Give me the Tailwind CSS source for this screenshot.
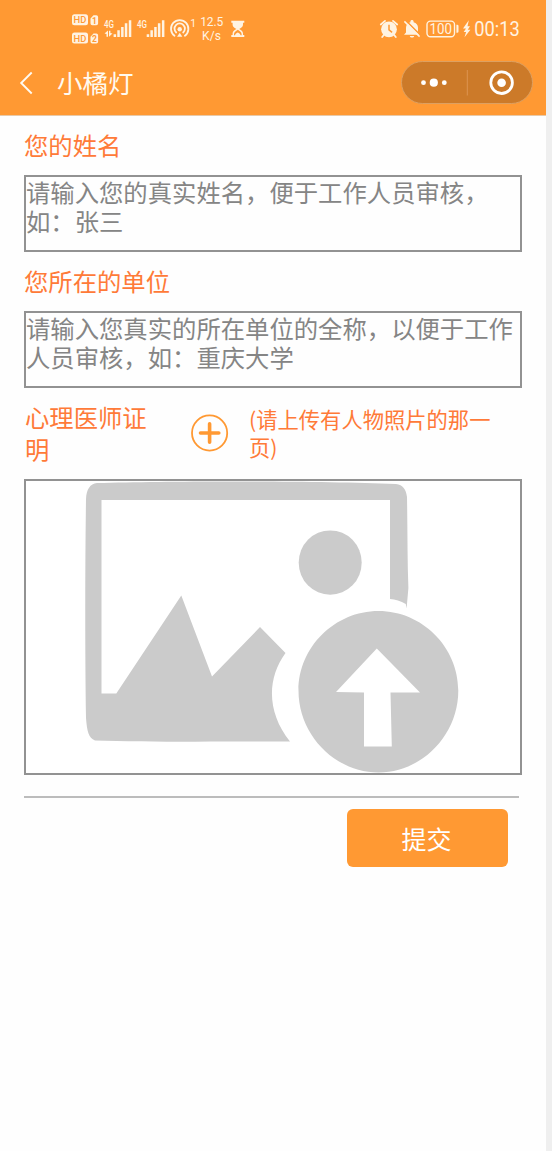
<!DOCTYPE html>
<html lang="zh-CN">
<head>
<meta charset="utf-8">
<title>小橘灯</title>
<script src="https://cdn.jsdelivr.net/npm/@tailwindcss/browser@4"></script>
</head>
<body class="h-[1151px] w-[552px] overflow-hidden bg-[#efefef] font-['Noto_Sans_CJK_SC',sans-serif]">
<div class="flex h-full w-[546px] flex-col bg-[#fefefe]">
  <header class="flex h-[116px] flex-col border-b border-[#e8c9a8] bg-[#ff9933]">
    <div class="flex h-[58px] justify-between pl-[72px] pr-[25px] text-[#fff3e2]">
      <svg class="h-[58px] w-[176px] shrink-0" viewBox="72 0 176 58" fill="currentColor" font-family="Roboto, sans-serif">
        <rect x="72" y="14.3" width="16" height="11" rx="2.5"/>
        <path d="M90.5 18.5l3-3.2h2.8a1.8 1.8 0 0 1 1.8 1.8v6.4a1.8 1.8 0 0 1-1.8 1.8h-4a1.8 1.8 0 0 1-1.8-1.8z"/>
        <rect x="72" y="32.5" width="16" height="11" rx="2.5"/>
        <path d="M90.5 36.7l3-3.2h2.8a1.8 1.8 0 0 1 1.8 1.8v6.4a1.8 1.8 0 0 1-1.8 1.8h-4a1.8 1.8 0 0 1-1.8-1.8z"/>
        <g fill="#ff9933" font-weight="500">
          <text x="73.6" y="23.3" font-size="9.8" textLength="12.8" lengthAdjust="spacingAndGlyphs">HD</text>
          <text x="92" y="23.7" font-size="8.5" font-weight="700">1</text>
          <text x="73.6" y="41.5" font-size="9.8" textLength="12.8" lengthAdjust="spacingAndGlyphs">HD</text>
          <text x="92" y="41.9" font-size="8.5" font-weight="700">2</text>
        </g>
        <g font-size="10.5" font-weight="500">
          <text x="104" y="27.7" textLength="10" lengthAdjust="spacingAndGlyphs">4G</text>
          <text x="137" y="27.7" textLength="10" lengthAdjust="spacingAndGlyphs">4G</text>
        </g>
        <path d="M104.500 33.500l3.500-3v6.300h-1.500v-2.700zM109 30.800h1.400v2.200l2.100.4-3.500 3.300z"/>
        <path d="M113.600 34.300h2.500v2.700h-2.500zM117.300 30.300h2.500V37h-2.500zM121.100 27h2.500v10h-2.500zM124.800 23.300h2.500V37h-2.500zM128.800 20.300h2.500V37h-2.500z"/>
        <path d="M146.700 34.300h2.500v2.700h-2.500zM150.400 30.300h2.500V37h-2.500zM154.200 27h2.500v10h-2.500zM157.900 23.300h2.500V37h-2.500zM161.900 20.300h2.500V37h-2.500z"/>
        <g fill="none" stroke="currentColor" stroke-width="1.8" stroke-linecap="round">
          <path d="M174.500 35.700a8.700 8.700 0 1 1 10.400 0"/>
          <path d="M176.200 32.500a5.200 5.200 0 1 1 7 0"/>
        </g>
        <circle cx="179.700" cy="29.200" r="2.200"/>
        <path d="M179.700 32.800l2.600 3.900h-5.200z"/>
        <text x="190.200" y="27" font-size="10.5">1</text>
        <text x="200.200" y="26" font-size="12" textLength="23">12.5</text>
        <text x="202" y="40.300" font-size="12" textLength="19">K/s</text>
        <path d="M231.300 20.800h13v1.900h-1.300v1.800c0 2.100-1.300 3.100-3.800 4.400 2.500 1.300 3.800 2.500 3.800 4.500v1.700h1.300V37h-13v-1.900h1.300v-1.700c0-2 1.300-3.200 3.800-4.500-2.500-1.300-3.800-2.300-3.800-4.400v-1.800h-1.300z"/>
        <path fill="#ff9933" d="M234 35.200v-1.200c0-2 1.800-2.800 3.800-4.200 2 1.400 3.800 2.200 3.800 4.200v1.200h-1c-.5-1.500-1.500-2-2.800-2.700-1.300.7-2.300 1.200-2.800 2.700z"/>
      </svg>
      <svg class="h-[58px] w-[142px] shrink-0" viewBox="379 0 142 58" fill="currentColor" font-family="Roboto, sans-serif">
        <circle cx="389" cy="29.300" r="7.900"/>
        <path d="M380.800 24.500l4.200-3.600M397.200 24.500l-4.200-3.600M383.800 35l-1.600 2M394.200 35l1.600 2" fill="none" stroke="currentColor" stroke-width="1.800" stroke-linecap="round"/>
        <path d="M389 24.800v5l3.100 2.500" fill="none" stroke="#ff9933" stroke-width="1.500"/>
        <path d="M404 34.800l2-2.400v-4.600c0-2.900 1.700-5 4.400-5.600v-.6c0-2 3.200-2 3.200 0v.6c2.700.6 4.400 2.700 4.400 5.600v4.600l2 2.400zM409.800 35.900h4.400c-.3 2.200-4.100 2.200-4.400 0z"/>
        <path d="M405.800 20.500l15 15" stroke="#ff9933" stroke-width="1.600"/>
        <path d="M404.400 21.400l15.200 15.200" stroke="currentColor" stroke-width="1.500"/>
        <rect x="427" y="21.100" width="27.500" height="15.600" rx="3.500" fill="none" stroke="currentColor" stroke-width="1.400"/>
        <path d="M456.400 24.700h.8a1.300 1.300 0 0 1 1.300 1.300v5.400a1.300 1.300 0 0 1-1.300 1.300h-.8z"/>
        <text x="429.500" y="34" font-size="14" textLength="22.500" lengthAdjust="spacingAndGlyphs">100</text>
        <path d="M468.800 20.200l-5.800 8.300h3l-2.300 3.500h2.400l-1.600 5.200 5.900-7.500h-2.700l2.300-3.500h-2.500z"/>
        <text x="474.300" y="36.400" font-size="19.5" textLength="45.500" lengthAdjust="spacingAndGlyphs">00:13</text>
      </svg>
    </div>
    <div class="flex h-[57px] items-start justify-between pl-[19px] pr-[13px] pt-[3px]">
      <div class="flex h-[44px] items-center">
        <svg class="h-6 w-[15px]" viewBox="0 0 15 24" fill="none" stroke="#fffaf0" stroke-width="1.900"><path d="M12.700 1.500L2.200 12l10.500 10.500"/></svg>
        <h1 class="ml-[23px] h-[44px] text-[25.5px] leading-[42px] text-[#fffaf0] font-normal">小橘灯</h1>
      </div>
      <div class="flex h-[43px] w-[132px] items-center rounded-full border border-[#dda061] bg-[#cc7a29]">
        <svg class="h-[41px] w-[130px]" viewBox="0 0 130 41" fill="#fff">
          <circle cx="21.500" cy="20.700" r="2.400"/><circle cx="31.800" cy="20.700" r="4.100"/><circle cx="42.300" cy="20.700" r="2.400"/>
          <path d="M65.300 8v25.500" stroke="#dc9450" stroke-width="1"/>
          <circle cx="99.600" cy="20.700" r="10.800" fill="none" stroke="#fff" stroke-width="2.800"/>
          <circle cx="99.600" cy="20.700" r="4.300"/>
        </svg>
      </div>
    </div>
  </header>
  <main class="flex flex-col pl-6 pr-6 text-[24.35px] text-[#ff7a38]">
    <label class="mt-[13px] h-[46px] leading-[32px]">您的姓名</label>
    <div class="h-[77px] w-[498px] border-2 border-t-[#929292] border-r-[#929292] border-b-[#929292] border-l-[#929292] leading-[29px] text-[#858585] whitespace-nowrap">请输入您的真实姓名，便于工作人员审核，<br>如：张三</div>
    <label class="mt-[13px] h-[46px] leading-[32px]">您所在的单位</label>
    <div class="h-[77px] w-[498px] border-2 border-[#929292] leading-[29px] text-[#858585] whitespace-nowrap">请输入您真实的所在单位的全称，以便于工作<br>人员审核，如：重庆大学</div>
    <div class="flex h-[90px] items-center pl-px">
      <div class="w-[166px] leading-[32px]">心理医师证<br>明</div>
      <svg class="h-[38px] w-[38px] shrink-0" viewBox="0 0 38 38" fill="none" stroke="#ff9933"><circle cx="18.600" cy="19" r="17.600" stroke-width="1.800"/><path d="M9.500 19h18.300M18.600 9.800v18.400" stroke-width="3.600" stroke-linecap="round"/></svg>
      <div class="ml-5 text-[21.3px] leading-[28px] whitespace-nowrap">(请上传有人物照片的那一<br>页)</div>
    </div>
    <div class="mt-px h-[296px] w-[498px] border-2 border-[#929292] bg-white">
      <svg class="h-[292px] w-[494px]" viewBox="26 481 494 292" fill="#cbcbcb">
        <path d="M97 483C175 480.700 315 480.700 396 484C403 485 406 489 407 497C407.600 530 407.300 560 408.400 588L406.600 608.500L405.800 604Q398 599.500 390 599V500H101.500V693.500H116.300L181.300 595.500L212 676.500L260 627L285.500 653C266.500 679 267 713 290 741.500C230 741.500 145 742.300 95 740.500C88.500 738 87 731 86 718C85 650 85 570 86 499C86.500 489 90 484 97 483Z"/>
        <ellipse cx="330.200" cy="562.600" rx="31.500" ry="32.200"/>
        <path fill-rule="evenodd" d="M378.500 611C422 611 458.300 647 458.300 690.500C458.300 735 422 772.500 378.500 772.500C335 772.500 298.500 735 298.500 690.500C298.500 647 335 611 378.500 611ZM376.800 648.500L336 692L364 692.500V746.500H391.800L390.500 692.500H420Z"/>
      </svg>
    </div>
    <div class="mt-[21px] h-[2px] w-[495px] bg-[#bcbcbc]"></div>
    <button class="mt-[11px] ml-[323px] h-[58px] w-[161px] rounded-md bg-[#ff9933] pr-0.5 text-center text-[25px] leading-[58px] text-white">提交</button>
  </main>
</div>
</body>
</html>
